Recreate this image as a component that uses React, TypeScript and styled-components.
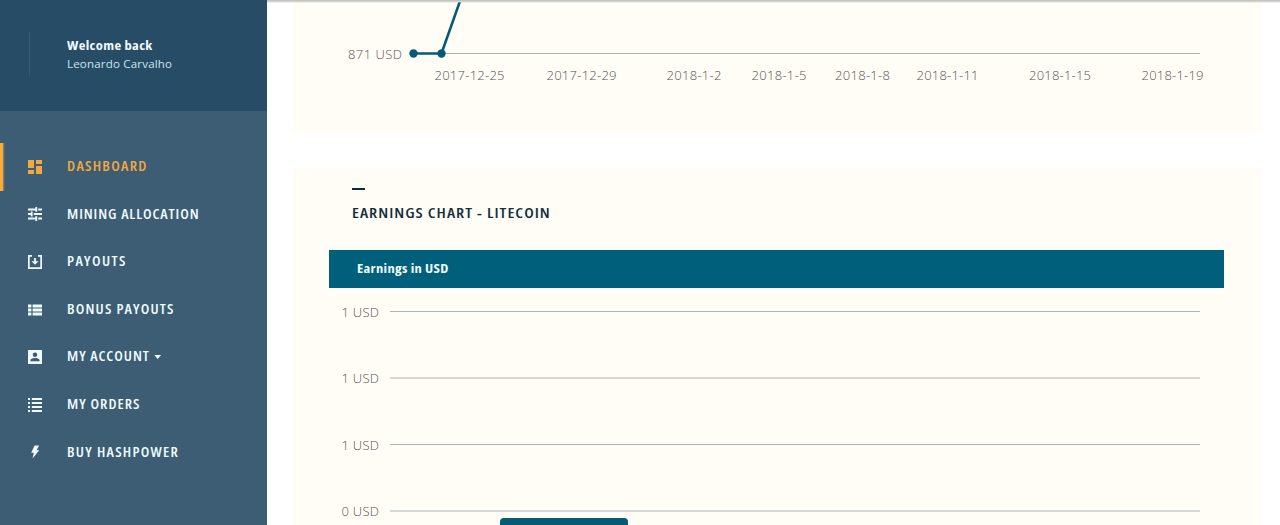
import React from "react";
import styled, { createGlobalStyle, css } from "styled-components";

interface MenuItem {
  name: string;
  icon: React.ReactNode;
  spacing: number;
  active?: boolean;
  caret?: boolean;
}

interface Tick {
  label: string;
  pos: number;
  width: number;
}

const menuItems: MenuItem[] = [
  {
    name: "Dashboard",
    spacing: 1.15,
    icon: <path d="M0 0h6v8H0zM8 0h6v4H8zM0 10h6v4H0zM8 6h6v8H8z" />,
    active: true,
  },
  {
    name: "Mining allocation",
    spacing: 0.82,
    icon: (
      <path d="M0 1.4h7.4V0h1.8v4.8H7.4V3.4H0zM10.2 1.4H14v2h-3.8zM0 6h2.8V4.6h1.8v4.8H2.8V8H0zM5.8 6H14v2H5.8zM0 10.6h7.4V9.2h1.8V14H7.4v-1.4H0zM10.2 10.6H14v2h-3.8z" />
    ),
  },
  {
    name: "Payouts",
    spacing: 1.24,
    icon: (
      <path d="M0 0h4v1.7H1.7v10.6h10.6V1.7H10V0h4v14H0zM6.1 3h1.8v3.2h2.6L7 9.8 3.5 6.2h2.6z" />
    ),
  },
  {
    name: "Bonus payouts",
    spacing: 1.04,
    icon: (
      <path d="M0 1.4h3.4v3H0zM4.6 1.4H14v3H4.6zM0 5.5h3.4v3H0zM4.6 5.5H14v3H4.6zM0 9.6h3.4v3H0zM4.6 9.6H14v3H4.6z" />
    ),
  },
  {
    name: "My account",
    spacing: 0.82,
    icon: (
      <path
        fillRule="evenodd"
        d="M0 0h14v14H0zM7 2.4a2.3 2.3 0 1 0 0 4.6 2.3 2.3 0 0 0 0-4.6zM2.4 11.2h9.2v-.8c0-1.6-3-2.4-4.6-2.4s-4.6.8-4.6 2.4z"
      />
    ),
    caret: true,
  },
  {
    name: "My orders",
    spacing: 0.9,
    icon: (
      <path d="M0 0h2v2H0zM3.8 0H14v2H3.8zM0 4h2v2H0zM3.8 4H14v2H3.8zM0 8h2v2H0zM3.8 8H14v2H3.8zM0 12h2v2H0zM3.8 12H14v2H3.8z" />
    ),
  },
  {
    name: "Buy hashpower",
    spacing: 1.12,
    icon: <path d="M6.6.4h4.4L8.6 5.2h2.6L4.6 13.4l1.2-5.6H3.2z" />,
  },
];

const dateTicks: Tick[] = [
  { label: "2017-12-25", pos: 141.5, width: 70 },
  { label: "2017-12-29", pos: 253.5, width: 70 },
  { label: "2018-1-2", pos: 373.5, width: 55 },
  { label: "2018-1-5", pos: 458.5, width: 55 },
  { label: "2018-1-8", pos: 542, width: 55 },
  { label: "2018-1-11", pos: 623.5, width: 62 },
  { label: "2018-1-15", pos: 736, width: 62 },
  { label: "2018-1-19", pos: 848.5, width: 62 },
];

const usdTicks: Tick[] = [
  { label: "1 USD", pos: 23.5, width: 37.5 },
  { label: "1 USD", pos: 90, width: 37.5 },
  { label: "1 USD", pos: 156.5, width: 37.5 },
  { label: "0 USD", pos: 223, width: 37.5 },
];

function Sidebar() {
  return (
    <SidebarStyled>
      <Profile>
        <Avatar />
        <div>
          <Greeting>Welcome back</Greeting>
          <UserName>Leonardo Carvalho</UserName>
        </div>
      </Profile>
      <Menu>
        {menuItems.map((item) => (
          <MenuRow key={item.name} $active={item.active}>
            <MenuIcon viewBox="0 0 14 14">{item.icon}</MenuIcon>
            <MenuLabel $spacing={item.spacing}>
              {item.name}
              {item.caret && <Caret />}
            </MenuLabel>
          </MenuRow>
        ))}
      </Menu>
    </SidebarStyled>
  );
}

function BitcoinChart() {
  return (
    <Chart width="968" height="133">
      <line x1="120" x2="907" y1="53.5" y2="53.5" />
      <text x="55" y="59" textLength="54">
        871 USD
      </text>
      <polyline points="120.5,53.5 148.5,53.5 169.5,-6" />
      <circle cx="120.5" cy="53.5" r="4.2" />
      <circle cx="148.5" cy="53.5" r="4.2" />
      {dateTicks.map((tick) => (
        <text key={tick.label} x={tick.pos} y="80" textLength={tick.width}>
          {tick.label}
        </text>
      ))}
    </Chart>
  );
}

function LitecoinChart() {
  return (
    <Chart width="968" height="237">
      {usdTicks.map((tick) => (
        <g key={tick.pos}>
          <line x1="97" x2="907" y1={tick.pos} y2={tick.pos} />
          <text x="48.5" y={tick.pos + 5.4} textLength={tick.width}>
            {tick.label}
          </text>
        </g>
      ))}
      <rect x="207" y="230" width="128" height="40" rx="4" />
    </Chart>
  );
}

function App() {
  return (
    <>
      <GlobalStyle />
      <Page>
        <Sidebar />
        <Content>
          <TopShadow />
          <Card $first>
            <BitcoinChart />
          </Card>
          <Card>
            <CardHeader>
              <TitleDash />
              <Title>Earnings chart - Litecoin</Title>
            </CardHeader>
            <Legend>
              <LegendLabel>Earnings in USD</LegendLabel>
            </Legend>
            <LitecoinChart />
          </Card>
        </Content>
      </Page>
    </>
  );
}

export default App;

const GlobalStyle = createGlobalStyle`
  * {
    box-sizing: border-box;
  }

  body {
    margin: 0;
    overflow: hidden;
    background: #fff;
    font-family: "Open Sans", "Noto Sans", sans-serif;
  }
`;

// the condensed face is a bit too narrow, so widen it
const semiCondensed = css`
  font-stretch: 75%;
  transform: scaleX(1.12);
  transform-origin: left center;
  white-space: nowrap;
`;

const Page = styled.div`
  display: flex;
  height: 525px;
  overflow: hidden;
`;

const SidebarStyled = styled.aside`
  flex: none;
  width: 267px;
  background: #3c5d73;
  color: #f0fbff;
`;

const Profile = styled.div`
  display: flex;
  height: 111px;
  padding: 32px 0 0 29px;
  background: #274c66;
`;

const Avatar = styled.div`
  width: 38px;
  height: 44px;
  border-left: 1px solid #365970;
`;

const Greeting = styled.div`
  ${semiCondensed}
  margin-top: 3px;
  font-size: 13px;
  font-weight: 700;
  line-height: 20px;
  letter-spacing: 0.32px;
`;

const UserName = styled.div`
  font-size: 11.5px;
  line-height: 17px;
  letter-spacing: 0.2px;
  color: #c9e6f2;
  white-space: nowrap;
`;

const Menu = styled.ul`
  margin: 0;
  padding: 32px 0 0;
  list-style: none;
`;

const MenuRow = styled.li<{ $active?: boolean }>`
  display: flex;
  align-items: center;
  height: 47.6px;
  padding-left: ${({ $active }) => ($active ? "25px" : "28px")};
  border-left: ${({ $active }) => ($active ? "3px solid #f9ac3a" : "none")};
  background: ${({ $active }) =>
    $active ? "linear-gradient(90deg, #94835d, #3c5d73 2px)" : "none"};
  color: ${({ $active }) => ($active ? "#f2a93f" : "#f0fbff")};
`;

const MenuIcon = styled.svg`
  width: 14px;
  height: 14px;
  margin-right: 25px;
  fill: currentColor;
`;

const MenuLabel = styled.span<{ $spacing: number }>`
  ${semiCondensed}
  margin-top: -1.5px;
  font-size: 13.5px;
  font-weight: 600;
  letter-spacing: ${({ $spacing }) => $spacing}px;
  text-transform: uppercase;
`;

const Caret = styled.span`
  display: inline-block;
  margin-left: 4px;
  vertical-align: 2px;
  border: 4px solid transparent;
  border-width: 4px 3.5px 0;
  border-top-color: currentColor;
`;

const Content = styled.main`
  position: relative;
  flex: 1;
  padding-left: 26px;
`;

const TopShadow = styled.div`
  position: absolute;
  top: 0;
  left: 0;
  right: 0;
  height: 3px;
  background: linear-gradient(#bdbdbb, #d8d8d4 60%, transparent);
`;

const Card = styled.section<{ $first?: boolean }>`
  width: 968px;
  height: ${({ $first }) => ($first ? "133px" : "357px")};
  margin-bottom: 35px;
  background: #fffdf6;
  overflow: hidden;
`;

const CardHeader = styled.header`
  height: 82px;
  padding: 20px 0 0 59px;
`;

const TitleDash = styled.div`
  width: 13px;
  height: 2px;
  margin-bottom: 12px;
  background: #0b2b40;
`;

const Title = styled.h2`
  ${semiCondensed}
  margin: 0;
  font-size: 15px;
  font-weight: 600;
  line-height: 20px;
  letter-spacing: 0.9px;
  text-transform: uppercase;
  color: #12303f;
`;

const Legend = styled.div`
  width: 895px;
  height: 38px;
  margin-left: 36px;
  padding-left: 28px;
  background: #005f7b;
`;

const LegendLabel = styled.div`
  ${semiCondensed}
  color: #f0fbff;
  font-size: 13px;
  font-weight: 700;
  line-height: 36px;
  letter-spacing: 0.28px;
`;

const Chart = styled.svg`
  display: block;

  line {
    stroke: #a9b6b7;
    stroke-width: 1.2;
  }

  polyline {
    fill: none;
    stroke: #045b76;
    stroke-width: 2.6;
  }

  circle,
  rect {
    fill: #045b76;
  }

  text {
    fill: #555;
    font-size: 13px;
    font-weight: 300;
  }
`;
